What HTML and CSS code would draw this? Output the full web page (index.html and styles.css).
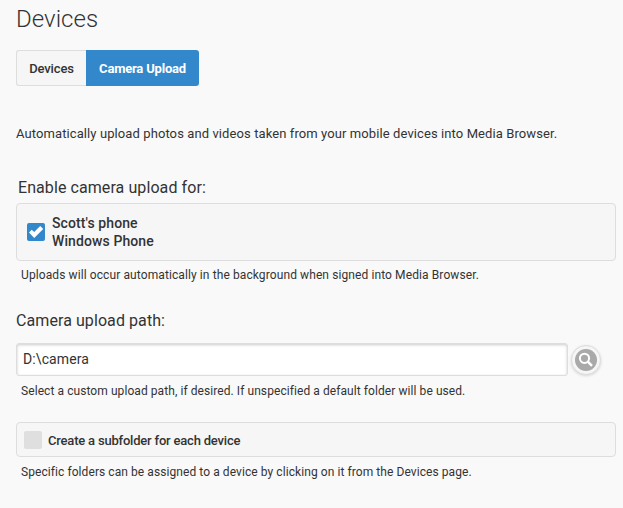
FILE: index.html
```html
<!DOCTYPE html>
<html lang="en">
<head>
<meta charset="utf-8">
<title>Devices</title>
<link rel="stylesheet" href="styles.css">
</head>
<body>
<main class="page">
  <h1 class="title"><span>Devices</span></h1>
  <nav class="tabs">
    <a class="tab tab-first">Devices</a>
    <a class="tab tab-active"><span>Camera Upload</span></a>
  </nav>
  <p class="intro"><span>Automatically upload photos and videos taken from your mobile devices into Media Browser.</span></p>

  <h2 class="heading heading-list"><span>Enable camera upload for:</span></h2>
  <label class="panel panel-device">
    <span class="check check-on">
      <svg width="18" height="18" viewBox="0 0 18 18"><path d="M2 9.6 4.7 6.8 7.2 9 13.2 3 16.2 6 7.2 15Z" fill="#fff"/></svg>
    </span>
    <span class="device"><span>Scott's phone</span><br><span>Windows Phone</span></span>
  </label>
  <p class="help help-upload"><span>Uploads will occur automatically in the background when signed into Media Browser.</span></p>

  <h2 class="heading heading-path"><span>Camera upload path:</span></h2>
  <div class="path-row">
    <div class="field"><span>D:\camera</span></div>
    <div class="search">
      <svg width="22" height="22" viewBox="0 0 22 22"><circle cx="11" cy="11" r="11" fill="#a9a9a9"/><circle cx="9.5" cy="9.3" r="4.6" fill="none" stroke="#fff" stroke-width="2"/><path d="M12.8 12.6 17 16.8" stroke="#fff" stroke-width="2.5"/></svg>
    </div>
  </div>
  <p class="help help-path"><span>Select a custom upload path, if desired. If unspecified a default folder will be used.</span></p>

  <label class="panel panel-sub">
    <span class="check"></span>
    <span class="sub-label">Create a subfolder for each device</span>
  </label>
  <p class="help help-sub"><span>Specific folders can be assigned to a device by clicking on it from the Devices page.</span></p>
</main>
</body>
</html>
```
FILE: styles.css
```css
* { box-sizing: border-box; }
body {
  margin: 0;
  background: #f9f9f9;
  color: #333;
  font-family: Roboto, "Liberation Sans", sans-serif;
  font-size: 13px;
}
h1, h2, p { margin: 0; font-weight: 400; }
.page { width: 623px; height: 508px; padding: 4px 7px 0 16px; overflow: hidden; }
.title { height: 30px; line-height: 30px; font-size: 24px; font-weight: 300; letter-spacing: .05px; }
.tabs { display: flex; height: 36px; margin-top: 16px; }
.tab { display: flex; align-items: center; justify-content: center; font-weight: 500; }
.tab-first {
  width: 70px;
  border: 1px solid #ddd;
  border-right: 0;
  border-radius: 3px 0 0 3px;
  background: #f6f6f6;
  letter-spacing: -.15px;
}
.tab-active { width: 113px; border-radius: 0 3px 3px 0; background: #38c; color: #fff; font-weight: 700; letter-spacing: -.2px; }
.intro { height: 20px; margin-top: 38px; line-height: 20px; letter-spacing: .095px; }
.heading { font-size: 16px; height: 22px; line-height: 22px; letter-spacing: .08px; }
.heading-list { margin-top: 33px; padding-left: 2px; }
.panel {
  display: flex;
  align-items: center;
  width: 600px;
  border: 1px solid #ddd;
  border-radius: 4px;
  background: #f6f6f6;
}
.panel-device { height: 58px; margin-top: 4px; padding-left: 10px; }
.check { flex: none; width: 18px; height: 18px; border-radius: 2px; background: #dfdfdf; }
.check-on { background: #38c; }
.check svg { display: block; }
.device { margin-left: 7px; font-size: 14px; line-height: 18px; font-weight: 500; letter-spacing: .1px; }
.help { height: 18px; line-height: 18px; padding-left: 5px; font-size: 12px; letter-spacing: .075px; }
.help-upload { margin-top: 5px; letter-spacing: .1px; }
.heading-path { margin-top: 26px; }
.path-row { display: flex; align-items: flex-start; height: 33px; margin-top: 11px; }
.field {
  width: 552px;
  height: 33px;
  padding-left: 6px;
  border: 1px solid #ddd;
  border-radius: 3px;
  background: #fff;
  box-shadow: inset 0 1px 3px rgba(0, 0, 0, .2);
  font-size: 14px;
  line-height: 30px;
  letter-spacing: .1px;
}
.search {
  display: flex;
  align-items: center;
  justify-content: center;
  width: 30px;
  height: 30px;
  margin: 2px 0 0 3px;
  border: 1px solid #ddd;
  border-radius: 50%;
  background: #f6f6f6;
  box-shadow: 0 1px 3px rgba(0, 0, 0, .15);
}
.help-path { margin-top: 6px; }
.panel-sub { height: 35px; margin-top: 22px; padding-left: 7px; }
.sub-label { margin-left: 6px; padding-top: 2px; font-size: 13px; font-weight: 500; letter-spacing: -.2px; }
.help-sub { margin-top: 6px; }
```
